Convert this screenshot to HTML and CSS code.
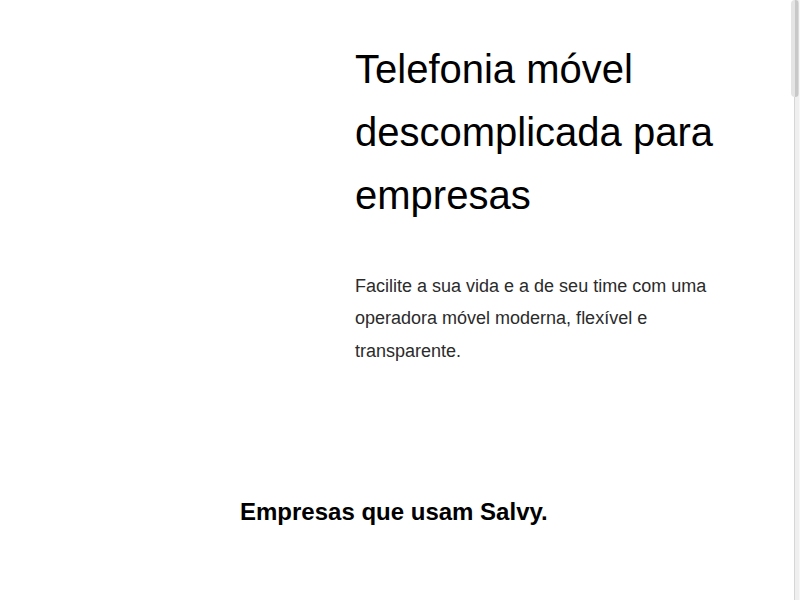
FILE: index.html
```html
<!DOCTYPE html>
<html lang="pt-BR">
<head>
<meta charset="utf-8">
<title>Salvy — Telefonia móvel descomplicada para empresas</title>
<link rel="stylesheet" href="styles.css">
</head>
<body>
  <main class="page">
    <section class="hero">
      <div class="hero-media"></div>
      <div class="hero-text">
        <h1 class="hero-title">Telefonia móvel descomplicada para empresas</h1>
        <p class="hero-lead">Facilite a sua vida e a de seu time com uma operadora móvel moderna, flexível e transparente.</p>
      </div>
    </section>
    <section class="clients">
      <h2 class="clients-title">Empresas que usam Salvy.</h2>
      <div class="clients-logos"></div>
    </section>
  </main>
  <div class="scrollbar" aria-hidden="true"><div class="scrollbar-thumb"></div></div>
</body>
</html>
```

FILE: styles.css
```css
html {
  background: #fff;
  scrollbar-width: none;
}

body {
  margin: 0;
  font-family: "Liberation Sans", Arial, sans-serif;
  color: #000;
}

.page {
  display: flex;
  flex-direction: column;
}

.hero {
  display: flex;
  padding-top: 38px;
}

.hero-media {
  width: 355px;
  flex: none;
}

.hero-text {
  width: 380px;
}

.hero-title {
  margin: 0;
  font-size: 40px;
  line-height: 63px;
  font-weight: 400;
  color: #000;
}

.hero-lead {
  margin: 43px 0 0;
  font-size: 18px;
  line-height: 1.8;
  color: #2b2b2b;
}

.clients {
  padding: 131px 0 0 240px;
}

.clients-title {
  margin: 0;
  font-size: 24px;
  font-weight: 700;
  color: #000;
}

.clients-logos {
  height: 3180px;
}

.scrollbar {
  position: fixed;
  top: 0;
  right: 0;
  width: 9px;
  height: 100vh;
  background: linear-gradient(to right, #fff 0 3px, #d6d6d6 3px 4px, #efefef 4px 8px, #f7f7f7 8px);
}

.scrollbar-thumb {
  width: 8px;
  height: 97px;
  border-radius: 4px;
  background: linear-gradient(to right, #e4e4e4 0 4px, #c8c8c8 4px 7px, #dadada 7px);
}
```
